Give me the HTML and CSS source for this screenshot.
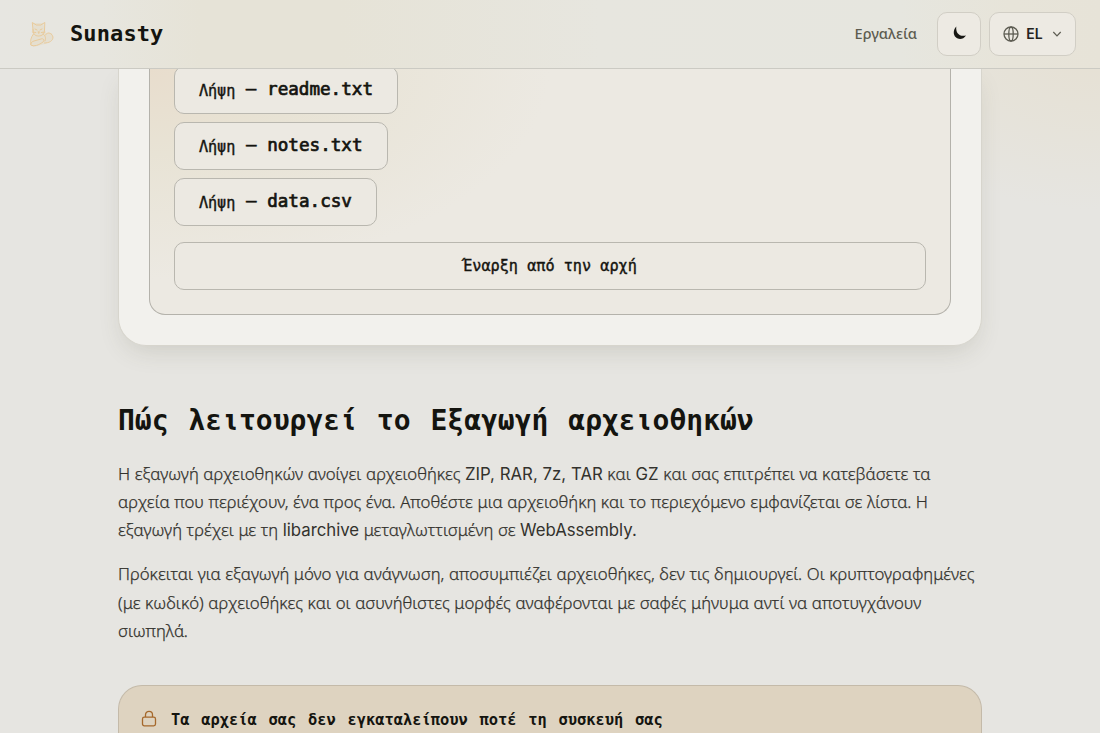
FILE: index.html
```html
<!DOCTYPE html>
<html lang="el">
<head>
<meta charset="utf-8">
<title>Sunasty</title>
<link rel="stylesheet" href="styles.css">
</head>
<body>
<header class="header">
  <a class="brand">
    <svg class="cat" viewBox="0 0 32 32" fill="none" stroke="#e9c794" stroke-width=".9" stroke-linecap="round" stroke-linejoin="round"><path fill="#e5dfd0" stroke="none" d="M9 5h10l3 11 6-1 1 6-8 5-12 3-2-4 2-10z"/><path d="M9 12 8.300 4.500l4 2.500h4.500l4-2.500-.3 7.500c0 4-2.500 6-6 6S9 16 9 12z"/><path d="m11 11 2 1m5-1-2 1m-2 2h1.500m-.7 0v1.500m-3-1-3.500-.5m9 .5 3.500-.5M9.500 16C7 19 6 23 7 26m12-10c3 2 3 5 2 7M7 27c3 2 8 0 12-3 2-2 0-4-2-3l-7 2c-3 1-4 3-3 4zM21.500 17c1-3 6-3 7.500 2 0 4-4 6-8.500 6"/></svg>
    <span class="brand-name">Sunasty</span>
  </a>
  <nav class="nav">
    <a class="nav-link">Εργαλεία</a>
    <button class="tool theme"><svg width="18" height="18" viewBox="0 0 18 18"><path d="M6.300 1.500C5.500 8 9.300 12 16 10.500 13.300 14.600 8.700 15 5.800 12.300 2.800 9.500 3.300 4.500 6.300 1.500z" fill="#171713"/></svg></button>
    <button class="tool lang"><svg width="16" height="16" viewBox="0 0 16 16" fill="none" stroke="#5d5c52" stroke-width="1.300"><circle cx="8" cy="8" r="7"/><ellipse cx="8" cy="8" rx="2.200" ry="7"/><path d="M1 8h14"/></svg><span>EL</span><svg width="10" height="8" viewBox="0 0 10 8" fill="none" stroke="#5d5c52" stroke-width="1.200"><path d="m1.300 2 3.700 3.800L8.700 2"/></svg></button>
  </nav>
</header>
<main class="main">
  <section class="card">
    <div class="panel">
      <div class="files">
        <button class="btn readme"><span class="gr">Λήψη</span><span class="dash">—</span><span class="file">readme.txt</span></button>
        <button class="btn notes"><span class="gr">Λήψη</span><span class="dash">—</span><span class="file">notes.txt</span></button>
        <button class="btn data"><span class="gr">Λήψη</span><span class="dash">—</span><span class="file">data.csv</span></button>
      </div>
      <button class="btn restart">Έναρξη από την αρχή</button>
    </div>
  </section>
  <h2 class="title">Πώς λειτουργεί το Εξαγωγή αρχειοθηκών</h2>
  <p class="text">Η εξαγωγή αρχειοθηκών ανοίγει αρχειοθήκες <span class="lat">ZIP, RAR, 7z, TAR</span> και <span class="lat">GZ</span> και σας επιτρέπει να κατεβάσετε τα<br>αρχεία που περιέχουν, ένα προς ένα. Αποθέστε μια αρχειοθήκη και το περιεχόμενο εμφανίζεται σε λίστα. Η<br>εξαγωγή τρέχει με τη <span class="lat">libarchive</span> μεταγλωττισμένη σε <span class="lat">WebAssembly.</span></p>
  <p class="text">Πρόκειται για εξαγωγή μόνο για ανάγνωση, αποσυμπιέζει αρχειοθήκες, δεν τις δημιουργεί. Οι κρυπτογραφημένες<br>(με κωδικό) αρχειοθήκες και οι ασυνήθιστες μορφές αναφέρονται με σαφές μήνυμα αντί να αποτυγχάνουν<br>σιωπηλά.</p>
  <aside class="notice">
    <svg width="16" height="18" viewBox="0 0 16 18" fill="none" stroke="#a5682b" stroke-width="1.300"><rect x="1.500" y="7.200" width="13" height="8.600" rx="1.800"/><path d="M4.500 7V4.800C4.500 .2 11.500 .2 11.500 4.800V7"/></svg>
    <span class="notice-title">Τα αρχεία σας δεν εγκαταλείπουν ποτέ τη συσκευή σας</span>
  </aside>
</main>
</body>
</html>
```
FILE: styles.css
```css
* { box-sizing: border-box; }
html { overflow: hidden; }
body {
  margin: 0; height: 733px; overflow: hidden; color: #14140f;
  font-family: "Noto Sans", sans-serif;
  background:
    radial-gradient(ellipse 260px 170px at 1100px 40px, #e6e0d3 0%, rgba(230,225,212,.6) 50%, rgba(230,229,225,0) 100%),
    #e6e5e1;
}
button { font: inherit; color: inherit; margin: 0; }
.header {
  position: relative; z-index: 2; height: 69px; padding: 0 24px;
  display: flex; justify-content: space-between; align-items: center;
  border-bottom: 1px solid #cbcac3;
  background: linear-gradient(90deg, #e7e6e1 0, #e7e6df 100px, #e6e3d7 200px, #e6e3d7 340px, #e7e6df 600px, #e6e6df 900px, #e7e4d9 1010px, #e7e3d8 1100px);
}
.brand { display: flex; align-items: center; gap: 14px; }
.cat { width: 32px; height: 32px; }
.brand-name { font: bold 22px/1 "DejaVu Sans Mono", monospace; letter-spacing: .1px; }
.nav { display: flex; align-items: center; gap: 8px; }
.nav-link { position: relative; top: -1px; font-size: 14.6px; font-weight: 500; color: #5d5c50; margin-right: 12px; }
.tool { height: 44px; border: 1px solid #d1cec5; border-radius: 10px; background: #edeae3; display: flex; align-items: center; justify-content: center; padding: 0; }
.theme { width: 44px; }
.lang { width: 87px; gap: 7px; font: 600 14px "Inter", sans-serif; color: #24231e; }
.lang span { margin-right: 2px; position: relative; top: -.5px; }
.main { width: 864px; margin: 0 auto; }
.card {
  height: 277px; padding: 0 30px 30px; border: 1px solid #d7d5cd; border-top: 0;
  border-radius: 0 0 28px 28px; background: #f2f1ed;
  box-shadow: 0 10px 24px -6px rgba(75,75,55,.17);
}
.panel {
  display: flow-root; height: 246px; padding: 0 24px; border: 1px solid #b4b2ab; border-top: 0; border-radius: 0 0 16px 16px;
  background: radial-gradient(ellipse 400px 210px at 0 0, #e8ddcd 0%, #e8e3d5 40%, rgba(236,233,225,0) 100%), #ece9e2;
}
.files { display: flex; flex-direction: column; align-items: flex-start; gap: 8px; margin-top: -3px; }
.btn {
  height: 48px; border: 1px solid #b9b7af; border-radius: 10px; background: #ece9e2; padding: 0 24px;
  display: flex; align-items: center; white-space: nowrap;
  font: 15.2px/1 "DejaVu Sans Mono", monospace; -webkit-text-stroke: .4px;
}
.readme { width: 224px; }
.notes { width: 214px; }
.data { width: 203px; }
.gr { padding-top: 3px; letter-spacing: -.1px; }
.dash { width: 32px; text-align: center; font-size: 17.6px; margin-top: -2px; }
.file { font-size: 17.6px; margin-top: -1px; -webkit-text-stroke: .7px; }
.restart { width: 100%; margin-top: 16px; padding-top: 2px; justify-content: center; }
.title { margin: 53px 0 0; font: bold 28px/44px "DejaVu Sans Mono", monospace; word-spacing: 3px; white-space: nowrap; }
.text { margin: 17px 0 0; font-size: 16.8px; font-weight: 300; line-height: 28.2px; word-spacing: .2px; color: #33322d; -webkit-text-stroke: .25px; white-space: nowrap; }
.text + .text { margin-top: 15.4px; line-height: 28.5px; }
.lat { font-family: "Inter", sans-serif; font-weight: 400; letter-spacing: -.02px; -webkit-text-stroke: 0; }
.notice {
  height: 49px; margin-top: 39.5px; padding: 24px 22px 0; display: flex; align-items: flex-start; gap: 14px;
  border: 1px solid #c4baa9; border-bottom: 0; border-radius: 24px 24px 0 0; background: #ded3c0;
}
.notice-title { font: bold 15.4px/20px "DejaVu Sans Mono", monospace; word-spacing: 2.4px; white-space: nowrap; }
```
